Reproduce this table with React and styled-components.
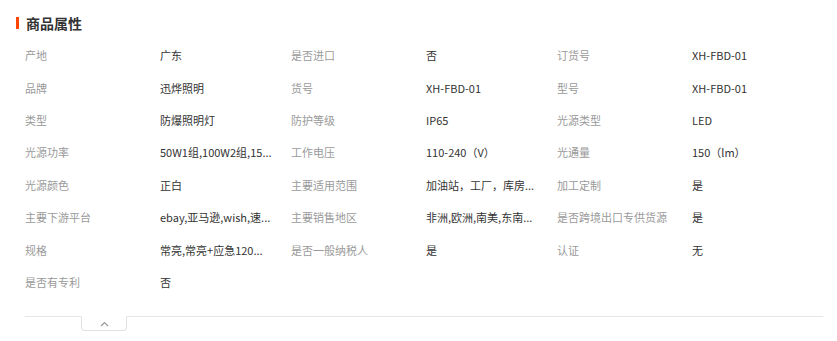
import React from 'react';
import styled, { createGlobalStyle } from 'styled-components';

const GlobalStyle = createGlobalStyle`
  html, body {
    margin:0;
    padding:0;
    background:#ffffff;
  }
  body {
    font-family: "Noto Sans CJK SC", "Noto Sans", sans-serif;
  }
`

const Panel = styled.section`
  width:837px;
  height:341px;
  padding:17px 0 0 0;
  box-sizing:border-box;
`

const Heading = styled.h3`
  margin:0 0 10px 16px;
  padding-left:7px;
  border-left:3px solid #ff4400;
  height:12px;
  display:flex;
  align-items:center;
  font-size:14px;
  font-weight:700;
  color:#333333;
  line-height:12px;
`

const Grid = styled.dl`
  margin:0 0 0 25px;
  display:grid;
  grid-template-columns:135px 131px 135px 131px 135px 131px;
  grid-auto-rows:32.4px;
  font-size:11px;
`

const Label = styled.dt`
  color:#9a9a9a;
  display:flex;
  align-items:center;
  margin:0;
  white-space:nowrap;
`

const Value = styled.dd`
  color:#333333;
  margin:0;
  display:flex;
  align-items:center;
  white-space:nowrap;
`

const Footer = styled.div`
  margin:18px 14px 0 25px;
  border-top:1px solid #e6e6e6;
  padding-left:56px;
`

const Toggle = styled.button`
  width:46px;
  height:15px;
  margin-top:-1px;
  padding:0;
  display:flex;
  align-items:center;
  justify-content:center;
  background:#ffffff;
  border:1px solid #e2e2e2;
  border-top-color:#ffffff;
  border-radius:0 0 4px 4px;
  cursor:pointer;
`

const props = [
  ['产地', '广东'],
  ['是否进口', '否'],
  ['订货号', 'XH-FBD-01'],
  ['品牌', '迅烨照明'],
  ['货号', 'XH-FBD-01'],
  ['型号', 'XH-FBD-01'],
  ['类型', '防爆照明灯'],
  ['防护等级', 'IP65'],
  ['光源类型', 'LED'],
  ['光源功率', '50W1组,100W2组,15...'],
  ['工作电压', '110-240（V）'],
  ['光通量', '150（lm）'],
  ['光源颜色', '正白'],
  ['主要适用范围', '加油站，工厂，库房...'],
  ['加工定制', '是'],
  ['主要下游平台', 'ebay,亚马逊,wish,速...'],
  ['主要销售地区', '非洲,欧洲,南美,东南...'],
  ['是否跨境出口专供货源', '是'],
  ['规格', '常亮,常亮+应急120...'],
  ['是否一般纳税人', '是'],
  ['认证', '无'],
  ['是否有专利', '否'],
]

const App = () => (
  <Panel>
    <GlobalStyle />
    <Heading>商品属性</Heading>
    <Grid>
      {props.map(([k, v]) => (
        <React.Fragment key={k}>
          <Label>{k}</Label>
          <Value>{v}</Value>
        </React.Fragment>
      ))}
    </Grid>
    <Footer>
      <Toggle aria-label="收起">
        <svg width="9" height="6" viewBox="0 0 9 6">
          <path d="M1 5 L4.5 1.5 L8 5" fill="none" stroke="#999" strokeWidth="1.2" />
        </svg>
      </Toggle>
    </Footer>
  </Panel>
)

export default App;
